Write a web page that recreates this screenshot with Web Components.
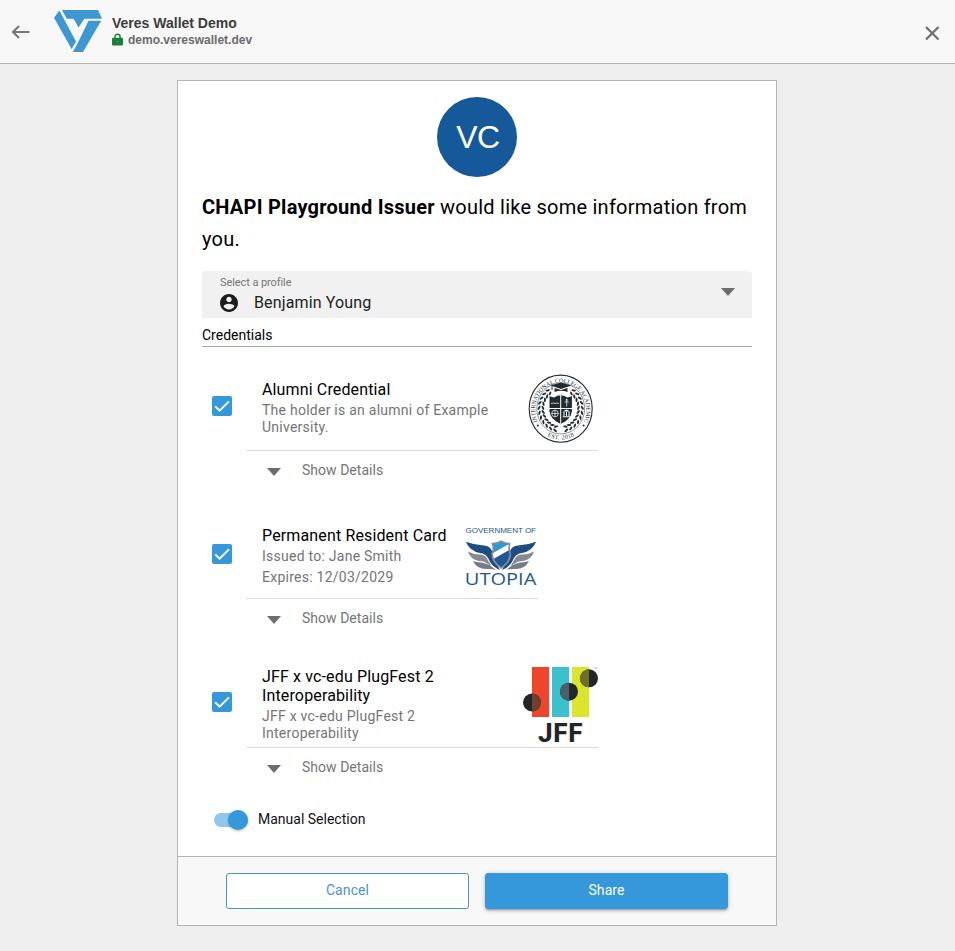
<!DOCTYPE html>
<html lang="en">
<head>
<meta charset="utf-8">
<title>Veres Wallet Demo</title>
<style>
html,body{margin:0;height:100%}
body{background:#efefef;font-family:Roboto,"Liberation Sans",sans-serif;color:#000;overflow:hidden}
</style>
</head>
<body>
<wallet-app></wallet-app>
<script>
const define = (name, html) => customElements.define(name, class extends HTMLElement {
  constructor(){
    super();
    const t = document.createElement('template');
    t.innerHTML = html;
    this.attachShadow({mode:'open'}).append(t.content.cloneNode(true));
  }
});

define('veres-logo', `<style>:host{display:block;width:48px;height:42px}svg{display:block}</style>
<svg width="48" height="42" viewBox="54 10 48 42" fill="#3c97d3">
<path d="M59.4 10.4 54 17.800 71.600 49 76 41.500Z"/>
<path d="M62 10H98L102 18.800H84.300L78.500 27.500 73.600 18.800H66.800Z"/>
<path d="M88.500 20.700H101.200L83 52H72.800L77.500 43.500Z"/></svg>`);

define('app-header', `<style>
:host{display:flex;height:63px;border-bottom:1px solid #b4b4b4;background:#f8f8f8;align-items:center;font-family:"Liberation Sans",Arial,sans-serif;font-weight:bold}
.back{margin:0 22px 0 10px;width:22px;height:22px}
veres-logo{margin:-2px 10px 0 0}
.name{font-size:14px;line-height:17px;color:#3c3c3c}
.host{font-size:12px;line-height:16px;color:#6b6b6b;display:flex;gap:5px;align-items:center}
.host svg{width:11px;height:13px;margin-top:-1px}
.close{margin:2px 14px 0 auto;width:18px;height:18px}
svg{display:block}
</style>
<svg class="back" viewBox="0 0 22 22" fill="none" stroke="#777" stroke-width="2.1"><path d="M19.5 11H3.5M9 5 3 11 9 17"/></svg>
<veres-logo></veres-logo>
<div><div class="name">Veres Wallet Demo</div>
<div class="host"><svg viewBox="0 0 11 13"><path d="M2.9 6V3.8a2.6 2.6 0 0 1 5.2 0V6" fill="none" stroke="#188038" stroke-width="1.4"/><rect y="4.8" width="11" height="7.6" rx="1.2" fill="#188038"/><circle cx="5.5" cy="8.5" r=".8" fill="#4d9d66"/></svg><span>demo.vereswallet.dev</span></div></div>
<svg class="close" viewBox="0 0 18 18" stroke="#6f6f6f" stroke-width="2.3"><path d="M3 3 15.500 15.500M15.500 3 3 15.500"/></svg>`);

define('issuer-avatar', `<style>:host{display:flex;width:80px;height:80px;border-radius:50%;background:#15599a;color:#fff;align-items:center;justify-content:center;font:32px/80px "Liberation Sans",Arial,sans-serif}span{letter-spacing:-.6px;margin-left:2px}</style><span><slot></slot></span>`);

define('profile-select', `<style>
:host{display:flex;box-sizing:border-box;height:47px;background:#f1f1f1;border-radius:4px 4px 0 0;padding:4px 17px 0 18px}
.label{font-size:11px;line-height:14px;color:#757575;letter-spacing:-.08px;margin-top:1px}
.value{display:flex;align-items:center;font-size:16px;line-height:24px;color:#222;letter-spacing:.14px;gap:16px;margin-top:1px}
.value svg{width:18px;height:18px;margin-top:-1px}
.arrow{margin:13px 0 0 auto;width:14px;height:8px}svg{display:block}
</style><div><div class="label">Select a profile</div><div class="value">
<svg viewBox="2 2 20 20"><path fill="#1d1d1d" d="M12 2C6.500 2 2 6.500 2 12s4.500 10 10 10 10-4.500 10-10S17.500 2 12 2zm0 3c1.700 0 3 1.300 3 3s-1.300 3-3 3-3-1.300-3-3 1.300-3 3-3zm0 14.200c-2.500 0-4.700-1.300-6-3.200 0-2 4-3.100 6-3.100s6 1.100 6 3.100c-1.300 1.900-3.500 3.200-6 3.200z"/></svg>
<span><slot></slot></span></div></div>
<svg class="arrow" viewBox="0 0 14 8"><path d="M0 0H14L7 8Z" fill="#6e6e6e"/></svg>`);

define('check-box', `<style>:host{display:block;width:20px;height:20px}svg{display:block}</style>
<svg width="20" height="20" viewBox="0 0 20 20"><rect width="20" height="20" rx="2" fill="#3498db"/><path d="M3.200 10.400 7.600 14.700 17 5.400" fill="none" stroke="#fff" stroke-width="2"/></svg>`);

define('credential-item', `<style>
:host{display:grid;grid-template-columns:34px auto;justify-content:start;height:148px;align-content:start;padding-left:10px}
check-box{margin-top:34px}
.main{box-sizing:border-box;width:var(--w,352px);height:var(--h,89px);border-bottom:1px solid #dcdcdc;display:flex;justify-content:space-between;padding-left:16px}
.text{padding-top:var(--pt,18px);white-space:nowrap}
.title{font-size:16px;line-height:19px;letter-spacing:.14px}
.sub{font-size:14px;line-height:var(--lh,17px);color:#757575;letter-spacing:.25px;margin-top:var(--mt,3px)}
.logo{padding-top:9px}
.details{grid-column:2;display:flex;align-items:center;font-size:14px;line-height:20px;color:#757575;gap:21px;padding:9px 0 0 21px;letter-spacing:.03px}
.details svg{margin-top:3px}
</style>
<check-box></check-box>
<div class="main"><div class="text"><div class="title"><slot name="title"></slot></div><div class="sub"><slot name="sub"></slot></div></div><div class="logo"><slot name="logo"></slot></div></div>
<div class="details"><svg width="14" height="8" viewBox="0 0 14 8"><path d="M0 0H14L7 8Z" fill="#6e6e6e"/></svg><span>Show Details</span></div>`);

customElements.define('seal-logo', class extends HTMLElement {
  constructor(){
    super();
    let leaves = '';
    for (let i = 0; i < 11; i++) {
      const a = (37 + i * 12.800) * Math.PI / 180;
      for (const s of [-1, 1]) for (const [r, tilt] of [[17.800, 28], [21.600, -28]]) {
        const x = 37.7 + s * Math.sin(a) * r, y = 36.5 - Math.cos(a) * r * 1.050;
        const rot = s * (a * 180 / Math.PI + tilt);
        leaves += `<ellipse cx="${x.toFixed(2)}" cy="${y.toFixed(2)}" rx="2.300" ry="1" transform="rotate(${rot.toFixed(1)} ${x.toFixed(2)} ${y.toFixed(2)})"/>`;
      }
    }
    this.attachShadow({mode:'open'}).innerHTML = `<style>:host{display:block;width:75px;height:75px}svg{display:block;overflow:visible}text{font-family:"Liberation Serif",serif;fill:#222c30}</style>
<svg width="75" height="75" viewBox="0 0 75 75" fill="#222c30">
<ellipse cx="37.700" cy="36.700" rx="31.500" ry="33.600" fill="#fff" stroke="#222c30" stroke-width="1.100"/>
<ellipse cx="37.700" cy="36.500" rx="23.900" ry="25.500" fill="none" stroke="#222c30" stroke-width=".5"/>
<path id="t" d="M15 50.500A25.600 27.300 0 1 1 60.400 50.500" fill="none"/><path id="b" d="M18.500 60A30 32 0 0 0 56.900 60" fill="none"/>
<text font-size="6" textLength="107" x="1"><textPath href="#t">INTERNATIONAL COLLEGE ACADEMIC</textPath></text>
<text font-size="6" textLength="28" x="7"><textPath href="#b">EST. 2018</textPath></text>
<circle cx="14.800" cy="53.500" r="1"/><circle cx="60.600" cy="53.500" r="1"/>
${leaves}
<path d="M26 23.500 31 25Q37.700 20.500 44.400 25L49.400 23.500V39.500Q48.500 47.500 37.700 52.500 27 47.500 26 39.500Z" stroke="#fff" stroke-width="1"/>
<path d="M37.700 23V52M26 36.500H49.500" stroke="#fff" stroke-width="1"/>
<path d="M27.500 13.500 38 10.500 48.500 13.500 38 17Z"/><path d="M31.500 16 38 18 44.500 16V20Q38 17.500 31.500 20Z"/><path d="M29 14V18" stroke="#222c30"/>
<g stroke="#fff" fill="none" stroke-width=".7"><path d="M28 31.500Q30 30.500 32 31.500 34 30.500 36 31.500M43.700 28.500V34.500M41.600 30H45.800"/><circle cx="32" cy="41.500" r="3.300"/><path d="M28.500 41.500H35.500M32 38V45"/></g>
<path fill="#fff" d="M39.700 39.500 43.500 37.500 47.300 39.500ZM40.500 40H41.500V44H40.500ZM43 40H44V44H43ZM45.500 40H46.500V44H45.500ZM39.700 44.300H47.300V45.300H39.700ZM43.700 26.500 45 28.500H42.400Z"/>
</svg>`;
  }
});

const wing = `<path fill="#1e4d82" d="M465.800 541.800Q474 545 484 545.400 490.500 546 492 551L494.500 560 500 570Q493.500 567.500 490 562 487 553.600 480 553 470 551.500 465.800 541.800Z"/>
<path fill="#878a90" d="M467.800 551.500Q474 554.800 480.500 554.600 486 555 488 560.500L491.500 566 486 563Q484 561.200 479 561 471 560 467.800 551.500Z"/>
<path fill="#777c84" d="M473 561Q477.500 562.700 482 562.400L489.500 565 496 570Q491 568.500 487.500 569 477 569.500 473 561Z"/>`;

define('utopia-logo', `<style>:host{display:block;width:75px;height:75px}svg{display:block}text{font-family:"Open Sans","Liberation Sans",sans-serif;fill:#23588d}</style>
<svg width="75" height="75" viewBox="463 519 75 75">
<text x="465.500" y="533" font-size="6.600" style="font-family:'Liberation Sans'" textLength="70.500" lengthAdjust="spacingAndGlyphs">GOVERNMENT OF</text>
<g>${wing}</g><g transform="matrix(-1 0 0 1 1002 0)">${wing}</g>
<clipPath id="c"><path d="M493.500 544.500Q498 544 501 542.300 504 544 508.500 544.500 507.500 549 509.500 554 509.500 561 501.200 567 493 561 493 554 495 549 493.500 544.500Z"/></clipPath>
<path fill="#fff" stroke="#898c93" stroke-width="3.400" d="M493.500 544.500Q498 544 501 542.300 504 544 508.500 544.500 507.500 549 509.500 554 509.500 561 501.200 567 493 561 493 554 495 549 493.500 544.500Z"/>
<g clip-path="url(#c)"><path fill="#2b9bd8" d="M490 540H511V543.500L491 554.500Z"/><path fill="#fff" d="M491 554 511 543V550L492 561Z"/><path fill="#1d5795" d="M491 560.500 511 549V568H491Z"/></g>
<text x="464.800" y="585" font-size="17.200" textLength="71.500" lengthAdjust="spacingAndGlyphs">UTOPIA</text>
</svg>`);

define('jff-logo', `<style>:host{display:block;width:75px;height:75px}svg{display:block;overflow:visible}text{font-family:Roboto,sans-serif;font-weight:800;fill:#20262a}</style>
<svg width="75" height="75" viewBox="523 667 75 75">
<path fill="#f0452d" d="M532 667H549V717H532Z"/><path fill="#39c1ce" d="M552 667H569V717H552Z"/><path fill="#dce52c" d="M572 667H589V717H572Z"/>
<circle cx="532" cy="702.500" r="9" fill="#20262a"/><path fill="#71402c" d="M532 693.500a9 9 0 0 1 0 18Z"/>
<circle cx="569" cy="691.700" r="9" fill="#20262a"/><path fill="#4c6067" d="M569 682.700a9 9 0 0 0 0 18Z"/>
<circle cx="589" cy="678.300" r="9" fill="#20262a"/><path fill="#706f29" d="M589 669.300a9 9 0 0 0 0 18Z"/>
<text x="538" y="741.800" font-size="26" textLength="44.500">JFF</text>
<path stroke="#777" stroke-width=".6" d="M594 668H595.500M596 668H597.500"/>
</svg>`);

define('toggle-switch', `<style>
:host{display:flex;align-items:center;font-size:14px;line-height:20px;letter-spacing:0;color:#111;gap:10px}
.track{width:34px;height:14px;border-radius:7px;background:#90c7ed;display:flex;align-items:center;justify-content:flex-end}
.thumb{width:20px;height:20px;border-radius:50%;background:#3498db;box-shadow:0 1px 3px #0004;flex:none}
.l{margin-top:-2px}
</style><div class="track"><div class="thumb"></div></div><span class="l"><slot></slot></span>`);

define('action-button', `<style>
:host{display:flex;box-sizing:border-box;flex:1;height:36px;align-items:center;justify-content:center;border-radius:3px;font-size:14px;line-height:20px;padding-bottom:2px;letter-spacing:.1px;background:#fff;color:#4b93cd;border:1px solid #4b93c8}
:host([primary]){background:#3498db;color:#fff;border-color:#3498db;box-shadow:0 1px 5px #0003,0 2px 2px #00000024,0 3px 1px -2px #0000001f}
</style><slot></slot>`);

define('share-card', `<style>
:host{display:flex;flex-direction:column;box-sizing:border-box;width:600px;height:846px;background:#fff;border:1px solid #b4b4b4}
.body{flex:1;padding:16px 24px 0;min-height:0}
issuer-avatar{margin:0 auto}
.ask{font-size:20px;line-height:32px;letter-spacing:.24px;margin:14px 0 16px}
b{font-weight:700}
.section{font-size:14px;line-height:20px;padding:7px 0 1px;border-bottom:1px solid #aaa;letter-spacing:0}
.list{margin-top:15px}
.two{--w:292px;--pt:16px;--lh:21px;--mt:1px}
.three{--h:90px;--pt:9px;--mt:3px;height:153px}
toggle-switch{margin-left:12px}
.foot{display:flex;gap:16px;padding:16px 48px;background:#f8f8f8;border-top:1px solid #b4b4b4}
</style>
<div class="body"><issuer-avatar>VC</issuer-avatar>
<div class="ask"><b>CHAPI Playground Issuer</b> <span>would like some information from</span> <span>you.</span></div>
<profile-select>Benjamin Young</profile-select>
<div class="section">Credentials</div>
<div class="list">
<credential-item><span slot="title">Alumni Credential</span><span slot="sub">The holder is an alumni of Example<br>University.</span><seal-logo slot="logo" style="margin-top:1px"></seal-logo></credential-item>
<credential-item class="two"><span slot="title">Permanent Resident Card</span><span slot="sub">Issued to: Jane Smith<br>Expires: 12/03/2029</span><utopia-logo slot="logo"></utopia-logo></credential-item>
<credential-item class="three"><span slot="title">JFF x vc-edu PlugFest 2<br>Interoperability</span><span slot="sub">JFF x vc-edu PlugFest 2<br>Interoperability</span><jff-logo slot="logo"></jff-logo></credential-item>
</div>
<toggle-switch>Manual Selection</toggle-switch></div>
<div class="foot"><action-button>Cancel</action-button><action-button primary>Share</action-button></div>`);

define('wallet-app', `<style>:host{display:flex;flex-direction:column}share-card{margin:16px 0 0 177px}</style><app-header></app-header><share-card></share-card>`);
</script>
</body>
</html>
